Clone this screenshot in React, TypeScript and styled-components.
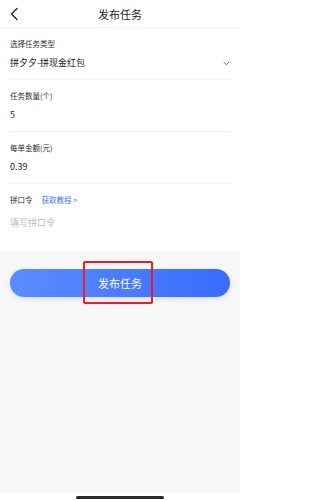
import React from "react";
import styled, { createGlobalStyle } from "styled-components";

const GlobalStyle = createGlobalStyle`
  html, body {
    margin: 0;
    padding: 0;
    background: #ffffff;
  }
  body {
    font-family: "Noto Sans CJK SC", "Noto Sans", "Liberation Sans", sans-serif;
    color: #222;
  }
  * {
    box-sizing: border-box;
  }
`;

const Page = styled.div`
  width: 240px;
  height: 500px;
  display: flex;
  flex-direction: column;
  overflow: hidden;
`;

const Header = styled.div`
  height: 28px;
  display: flex;
  align-items: center;
  justify-content: center;
  position: relative;
  border-bottom: 1px solid #f4f4f4;
`;

const BackButton = styled.button`
  position: absolute;
  left: 6px;
  top: 5px;
  width: 16px;
  height: 18px;
  padding: 0;
  border: none;
  background: none;
  display: flex;
  align-items: center;
  justify-content: center;
`;

const Title = styled.div`
  font-size: 11px;
  line-height: 14px;
  color: #1a1a1a;
`;

const Form = styled.div`
  background: #fff;
  padding: 0 10px;
`;

const Field = styled.div<{ $last?: boolean }>`
  padding: 10px 0 ${(p) => (p.$last ? "0" : "9px")};
  border-bottom: ${(p) => (p.$last ? "none" : "1px solid #f2f2f2")};
`;

const LabelRow = styled.div`
  display: flex;
  align-items: center;
  gap: 9px;
  height: 12px;
`;

const Label = styled.span`
  font-size: 7.5px;
  line-height: 12px;
  color: #2e2e2e;
`;

const Link = styled.span`
  font-size: 7.5px;
  line-height: 12px;
  color: #3b78f0;
`;

const ValueRow = styled.div`
  margin-top: 6px;
  height: 14px;
  display: flex;
  align-items: center;
  justify-content: space-between;
  font-size: 9px;
  line-height: 14px;
  color: #1c1c1c;
`;

const TextArea = styled.textarea`
  display: block;
  width: 100%;
  height: 35px;
  margin-top: 10px;
  padding: 0;
  border: none;
  outline: none;
  resize: none;
  font-family: inherit;
  font-size: 9px;
  line-height: 14px;
  color: #222;
  background: transparent;
  &::placeholder {
    color: #bcbcbc;
  }
`;

const Footer = styled.div`
  flex: 1;
  background: #f7f7f7;
  padding: 18px 10px 0;
`;

const ButtonWrap = styled.div`
  position: relative;
`;

const SubmitButton = styled.button`
  width: 100%;
  height: 28px;
  border: none;
  border-radius: 14px;
  background: linear-gradient(90deg, #5b8cff 0%, #3a6bff 100%);
  box-shadow: 0 2px 5px rgba(60, 110, 255, 0.18);
  color: #fff;
  font-family: inherit;
  font-size: 11px;
  line-height: 14px;
`;

const Highlight = styled.div`
  position: absolute;
  left: 73px;
  top: -8px;
  width: 70px;
  height: 43px;
  border: 2px solid #ee1c25;
  border-radius: 2px;
  pointer-events: none;
`;

const HomeArea = styled.div`
  height: 7px;
  background: #fff;
  display: flex;
  justify-content: center;
  padding-top: 3px;
`;

const HomeBar = styled.div`
  width: 88px;
  height: 3px;
  border-radius: 2px;
  background: #2a2a2a;
`;

const ChevronLeft = () => (
  <svg width="10" height="14" viewBox="0 0 10 14" fill="none">
    <path d="M8 1.5L2.5 7L8 12.5" stroke="#222" strokeWidth="1.4" strokeLinecap="round" strokeLinejoin="round" />
  </svg>
);

const ChevronDown = () => (
  <svg width="7" height="5" viewBox="0 0 7 5" fill="none">
    <path d="M1 1.2L3.5 3.7L6 1.2" stroke="#555" strokeWidth="0.9" strokeLinecap="round" strokeLinejoin="round" />
  </svg>
);

const App = () => {
  return (
    <>
      <GlobalStyle />
      <Page>
        <Header>
          <BackButton>
            <ChevronLeft />
          </BackButton>
          <Title>发布任务</Title>
        </Header>
        <Form>
          <Field>
            <LabelRow>
              <Label>选择任务类型</Label>
            </LabelRow>
            <ValueRow>
              <span>拼夕夕-拼现金红包</span>
              <ChevronDown />
            </ValueRow>
          </Field>
          <Field>
            <LabelRow>
              <Label>任务数量(个)</Label>
            </LabelRow>
            <ValueRow>5</ValueRow>
          </Field>
          <Field>
            <LabelRow>
              <Label>每单金额(元)</Label>
            </LabelRow>
            <ValueRow>0.39</ValueRow>
          </Field>
          <Field $last>
            <LabelRow>
              <Label>拼口令</Label>
              <Link>获取教程 &gt;</Link>
            </LabelRow>
            <TextArea placeholder="填写拼口令" />
          </Field>
        </Form>
        <Footer>
          <ButtonWrap>
            <SubmitButton>发布任务</SubmitButton>
            <Highlight />
          </ButtonWrap>
        </Footer>
        <HomeArea>
          <HomeBar />
        </HomeArea>
      </Page>
    </>
  );
};

export default App;
